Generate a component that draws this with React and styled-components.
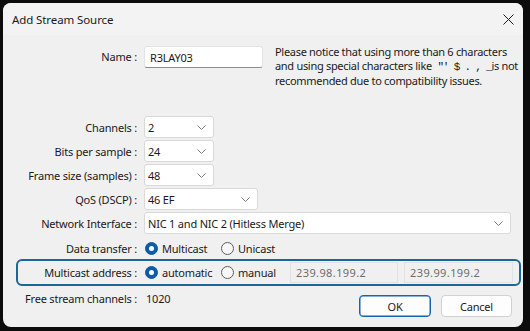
import React from "react";
import styled, { createGlobalStyle } from "styled-components";

const GlobalStyle = createGlobalStyle`
  html, body { margin: 0; padding: 0; background: #0c0c0c; }
  body {
    font-family: "Noto Sans", "Open Sans", sans-serif;
    font-size: 11px;
    letter-spacing: -0.2px;
    color: #1a1a1a;
  }
  * { box-sizing: border-box; }
`;

const Window = styled.div`
  margin: 3px 0 0 3px;
  width: 520px;
  height: 324px;
  background: #f0f0f0;
  border-radius: 8px;
  overflow: hidden;
  display: flex;
  flex-direction: column;
`;

const TitleBar = styled.div`
  height: 32px;
  flex: none;
  display: flex;
  align-items: center;
  justify-content: space-between;
  padding-left: 9px;
  background: #f3f3f3;
`;

const Title = styled.span`
  font-size: 11.5px;
  letter-spacing: -0.1px;
  color: #1a1a1a;
`;

const CloseButton = styled.div`
  width: 30px;
  height: 32px;
  display: flex;
  align-items: center;
  justify-content: center;
`;

const Form = styled.div`
  padding: 11px 12px 0 13px;
  display: flex;
  flex-direction: column;
`;

const Row = styled.div`
  display: grid;
  grid-template-columns: ${(p) => p.$labelWidth || 121}px 1fr;
  column-gap: 7px;
  align-items: ${(p) => (p.$top ? "start" : "center")};
  min-height: 24px;
  margin-top: ${(p) => p.$mt || 0}px;
  margin-bottom: ${(p) => p.$mb || 0}px;
`;

const Label = styled.div`
  text-align: right;
  white-space: nowrap;
  line-height: ${(p) => (p.$h ? p.$h + "px" : "normal")};
`;

const NameControls = styled.div`
  display: flex;
  align-items: flex-start;
  gap: 12px;
`;

const TextInput = styled.div`
  width: ${(p) => p.$w}px;
  height: 22px;
  flex: none;
  background: #ffffff;
  border: 1px solid #e3e3e3;
  border-bottom: 1px solid #8d8d8d;
  border-radius: 3px;
  padding-left: 5px;
  display: flex;
  align-items: center;
`;

const Note = styled.div`
  margin-top: -1px;
  line-height: 14px;
  white-space: nowrap;
  letter-spacing: -0.3px;
`;

const Code = styled.span`
  font-family: "Liberation Mono", monospace;
  font-size: 11px;
  letter-spacing: -1.2px;
  margin-left: 3px;
`;

const Select = styled.div`
  width: ${(p) => p.$w}px;
  height: 22px;
  background: #ffffff;
  border: 1px solid #d9d9d9;
  border-radius: 3px;
  padding: 0 7px 0 3px;
  display: flex;
  align-items: center;
  justify-content: space-between;
`;

const Chevron = () => (
  <svg width="9" height="5" viewBox="0 0 9 5">
    <path d="M0.5 0.5 L4.5 4.5 L8.5 0.5" fill="none" stroke="#7a7a7a" strokeWidth="1" />
  </svg>
);

const Controls = styled.div`
  display: flex;
  align-items: center;
`;

const RadioOption = styled.label`
  display: flex;
  align-items: center;
  gap: 4px;
  width: ${(p) => p.$w}px;
  flex: none;
`;

const RadioDot = styled.span`
  width: 13px;
  height: 13px;
  border-radius: 50%;
  flex: none;
  margin-left: 1px;
  position: relative;
  background: ${(p) => (p.$checked ? "#0f5ba5" : "#f6f6f6")};
  border: 1px solid ${(p) => (p.$checked ? "#0f5ba5" : "#5f5f5f")};
  &::after {
    content: "";
    display: ${(p) => (p.$checked ? "block" : "none")};
    position: absolute;
    left: 3px;
    top: 3px;
    width: 5px;
    height: 5px;
    border-radius: 50%;
    background: #ffffff;
  }
`;

const Radio = ({ checked, label, w }) => (
  <RadioOption $w={w}>
    <RadioDot $checked={checked} />
    <span>{label}</span>
  </RadioOption>
);

const GroupBox = styled.div`
  margin: -1px -10px 0 0;
  height: 27px;
  border: 2px solid #1b6797;
  border-radius: 6px;
  display: grid;
  grid-template-columns: 119px 1fr;
  column-gap: 7px;
  align-items: center;
`;

const AddressInput = styled.div`
  width: ${(p) => p.$w}px;
  height: 21px;
  flex: none;
  margin-left: ${(p) => p.$ml || 0}px;
  background: #f0f0f0;
  border: 1px solid #e2e2e2;
  padding-left: 5px;
  color: #6d6d6d;
  display: flex;
  align-items: center;
  letter-spacing: 0.4px;
`;

const Footer = styled.div`
  display: flex;
  align-items: flex-start;
`;

const Value = styled.div`
  padding-left: 2px;
`;

const ButtonBar = styled.div`
  margin: 9px -1px 0 auto;
  display: flex;
  gap: 10px;
`;

const Button = styled.div`
  width: ${(p) => p.$w}px;
  height: 22px;
  border-radius: 4px;
  background: #fdfdfd;
  border: 1px solid ${(p) => (p.$primary ? "#1565b0" : "#d0d0d0")};
  box-shadow: ${(p) => (p.$primary ? "inset 0 0 0 0.5px #1565b0" : "none")};
  display: flex;
  align-items: center;
  justify-content: center;
`;

export default function App() {
  return (
    <>
      <GlobalStyle />
      <Window>
        <TitleBar>
          <Title>Add Stream Source</Title>
          <CloseButton>
            <svg width="11" height="11" viewBox="0 0 11 11">
              <path d="M0.5 0.5 L10.5 10.5 M10.5 0.5 L0.5 10.5" stroke="#1a1a1a" strokeWidth="1" />
            </svg>
          </CloseButton>
        </TitleBar>
        <Form>
          <Row $top $mb={27}>
            <Label $h={22}>Name :</Label>
            <NameControls>
              <TextInput $w={119}>R3LAY03</TextInput>
              <Note>
                Please notice that using more than 6 characters
                <br />
                and using special characters like <Code>"' $ . , _</Code>is not
                <br />
                recommended due to compatibility issues.
              </Note>
            </NameControls>
          </Row>
          <Row>
            <Label>Channels :</Label>
            <Select $w={70}>
              <span>2</span>
              <Chevron />
            </Select>
          </Row>
          <Row>
            <Label>Bits per sample :</Label>
            <Select $w={70}>
              <span>24</span>
              <Chevron />
            </Select>
          </Row>
          <Row>
            <Label>Frame size (samples) :</Label>
            <Select $w={70}>
              <span>48</span>
              <Chevron />
            </Select>
          </Row>
          <Row>
            <Label>QoS (DSCP) :</Label>
            <Select $w={114}>
              <span>46 EF</span>
              <Chevron />
            </Select>
          </Row>
          <Row>
            <Label>Network Interface :</Label>
            <Select $w={367}>
              <span>NIC 1 and NIC 2 (Hitless Merge)</span>
              <Chevron />
            </Select>
          </Row>
          <Row $mt={1}>
            <Label>Data transfer :</Label>
            <Controls>
              <Radio checked label="Multicast" w={76} />
              <Radio label="Unicast" w={70} />
            </Controls>
          </Row>
          <GroupBox>
            <Label>Multicast address :</Label>
            <Controls>
              <Radio checked label="automatic" w={76} />
              <Radio label="manual" w={70} />
              <AddressInput $w={108}>239.98.199.2</AddressInput>
              <AddressInput $w={109} $ml={6}>239.99.199.2</AddressInput>
            </Controls>
          </GroupBox>
          <Footer>
            <Row>
              <Label>Free stream channels :</Label>
              <Value>1020</Value>
            </Row>
            <ButtonBar>
              <Button $primary $w={72}>OK</Button>
              <Button $w={71}>Cancel</Button>
            </ButtonBar>
          </Footer>
        </Form>
      </Window>
    </>
  );
}
